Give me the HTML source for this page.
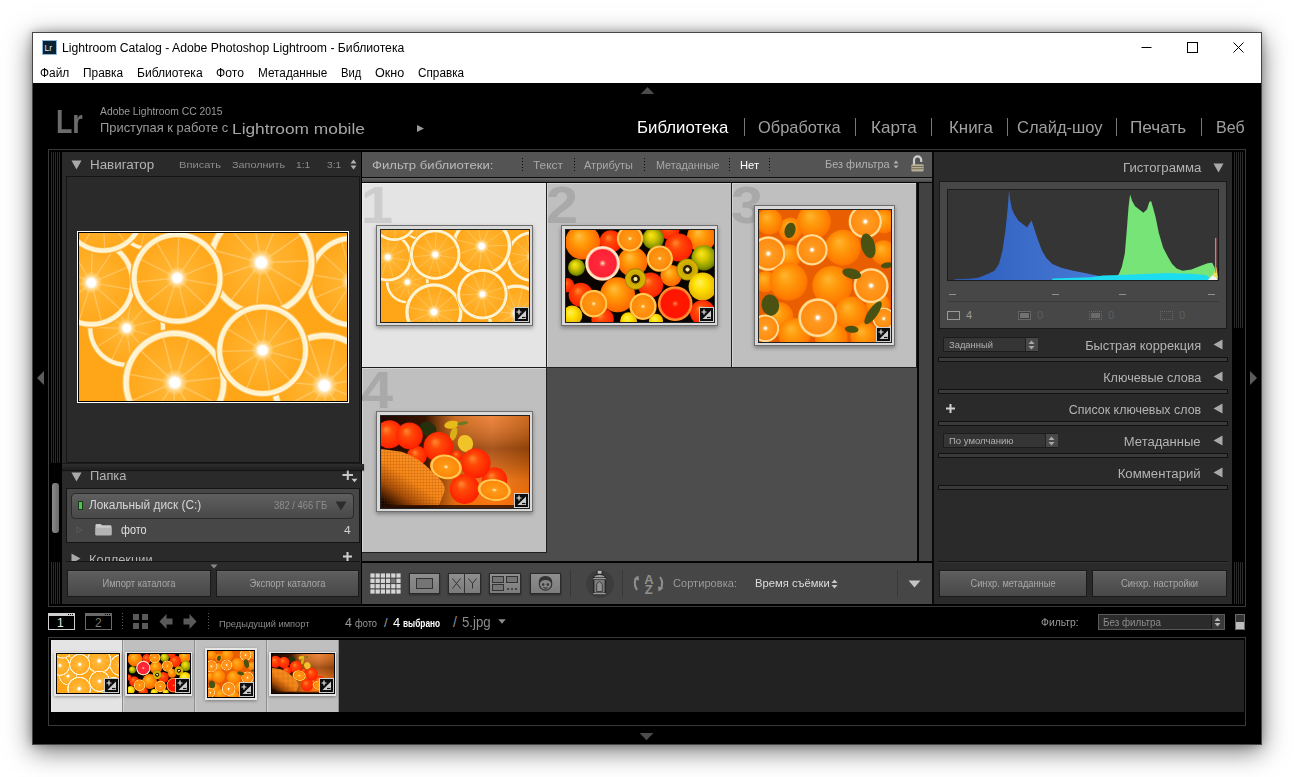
<!DOCTYPE html>
<html lang="ru">
<head>
<meta charset="utf-8">
<title>Lightroom Catalog - Adobe Photoshop Lightroom - Библиотека</title>
<style>
html,body{margin:0;padding:0}
body{width:1294px;height:777px;background:#fff;position:relative;overflow:hidden;font-family:"Liberation Sans",sans-serif;}
.a{position:absolute}
.t{position:absolute;white-space:nowrap;line-height:1;transform-origin:0 0}
#win{left:32px;top:32px;width:1230px;height:713px;box-sizing:border-box;border:1px solid #464646;background:#000;box-shadow:0 6px 24px rgba(0,0,0,.55),0 0 8px rgba(0,0,0,.25)}
#titlebar{left:33px;top:33px;width:1228px;height:50px;background:#fff}
.menu{font-size:12px;color:#000;top:67px}
.pan{background:#2a2a2a}
.hd{font-size:12.5px;color:#b4b4b4}
.sm{font-size:9.5px;color:#8c8c8c}
.strip{background:repeating-linear-gradient(90deg,#2b2b2b 0,#2b2b2b 1px,#000 1px,#000 2px)}
.btn{background:linear-gradient(#5e5e5e,#484848);border:1px solid #1a1a1a;box-sizing:border-box;box-shadow:inset 0 1px 0 #666}
.btn span{position:absolute;left:0;right:0;text-align:center;font-size:10px;color:#a8a8a8;line-height:1}
.sep{height:5px;box-sizing:border-box;border:1px solid #111;background:#3a3a3a;left:938px;width:290px}
.mod{font-size:17px;color:#a0a0a0;top:119px}
.cell{background:#bfbfbf}
.idx{font-weight:bold;font-size:51px;color:#a9a9a9;line-height:1;transform:scaleX(1.13)}
.fr{box-sizing:border-box;border:1px solid #6e6e6e;background:#d9d9d9;box-shadow:0 2px 4px rgba(0,0,0,.35)}
.ph{position:absolute;display:block}
.bdg{position:absolute;width:14px;height:14px;box-sizing:border-box;border:1px solid #d8d8d8;background:#111}
.dd{box-sizing:border-box;border:1px solid #1c1c1c;background:#353535}
</style>
</head>
<body>
<svg width="0" height="0" style="position:absolute">
<defs>
<radialGradient id="gsl" cx="50%" cy="50%" r="50%"><stop offset="0" stop-color="#fff"/><stop offset="0.09" stop-color="#fff"/><stop offset="0.16" stop-color="#ffd27a"/><stop offset="0.24" stop-color="#ffb430"/><stop offset="0.84" stop-color="#ffa81c"/><stop offset="0.87" stop-color="#ffefc4"/><stop offset="0.95" stop-color="#fff6dc"/><stop offset="0.975" stop-color="#ffbb48"/><stop offset="1" stop-color="#ffa010"/></radialGradient>
<g id="sl"><circle r="1" fill="url(#gsl)"/><path d="M0.115 0.035L0.812 0.251M0.077 0.092L0.547 0.650M0.015 0.119L0.109 0.843M-0.051 0.108L-0.364 0.768M-0.102 0.063L-0.722 0.449M-0.120 -0.002L-0.850 -0.012M-0.100 -0.066L-0.708 -0.470M-0.048 -0.110L-0.342 -0.778M0.019 -0.119L0.133 -0.840M0.080 -0.090L0.566 -0.634M0.116 -0.032L0.819 -0.228" stroke="#ffd890" stroke-width="0.03" opacity="0.5" fill="none"/></g>
<symbol id="p1" viewBox="0 0 148 92">
<rect width="148" height="92" fill="#ffa518"/>
<use href="#sl" transform="translate(26.3 52.1) scale(22) rotate(0)"/>
<use href="#sl" transform="translate(135.5 83.6) scale(30) rotate(37)"/>
<use href="#sl" transform="translate(151 26.6) scale(26) rotate(74)"/>
<use href="#sl" transform="translate(38 -8) scale(18) rotate(21)"/>
<use href="#sl" transform="translate(6.8 27.2) scale(25) rotate(58)"/>
<use href="#sl" transform="translate(13.3 -12.3) scale(24) rotate(5)"/>
<use href="#sl" transform="translate(52.9 81.9) scale(29.5) rotate(42)"/>
<use href="#sl" transform="translate(100.6 16.2) scale(30.5) rotate(79)"/>
<use href="#sl" transform="translate(54.2 24.6) scale(26) rotate(26)"/>
<use href="#sl" transform="translate(101.4 64.2) scale(26) rotate(63)"/>
</symbol>
<!--P2--><radialGradient id="gO" cx="0.5" cy="0.5" r="0.62" fx="0.38" fy="0.32"><stop offset="0" stop-color="#ffc040"/><stop offset="0.35" stop-color="#ff9a08"/><stop offset="0.8" stop-color="#ff6a00"/><stop offset="1" stop-color="#e04000"/></radialGradient>
<radialGradient id="gR" cx="0.5" cy="0.5" r="0.62" fx="0.38" fy="0.32"><stop offset="0" stop-color="#ff8a30"/><stop offset="0.3" stop-color="#ff4a08"/><stop offset="0.8" stop-color="#ff2200"/><stop offset="1" stop-color="#c81000"/></radialGradient>
<radialGradient id="gY" cx="0.5" cy="0.5" r="0.62" fx="0.38" fy="0.32"><stop offset="0" stop-color="#fff060"/><stop offset="0.4" stop-color="#ffe000"/><stop offset="0.8" stop-color="#e8b800"/><stop offset="1" stop-color="#a08000"/></radialGradient>
<radialGradient id="gG" cx="0.5" cy="0.5" r="0.62" fx="0.38" fy="0.32"><stop offset="0" stop-color="#f8e820"/><stop offset="0.35" stop-color="#d8c800"/><stop offset="0.7" stop-color="#8a9a00"/><stop offset="1" stop-color="#3a4a00"/></radialGradient>
<radialGradient id="gT" cx="0.5" cy="0.5" r="0.62" fx="0.38" fy="0.32"><stop offset="0" stop-color="#ffb530"/><stop offset="0.35" stop-color="#ff9a0c"/><stop offset="0.75" stop-color="#ff7c00"/><stop offset="0.92" stop-color="#f86400"/><stop offset="1" stop-color="#d84800"/></radialGradient>
<radialGradient id="hO" cx="0.5" cy="0.5" r="0.5" fx="0.5" fy="0.5"><stop offset="0" stop-color="#fff0c0"/><stop offset="0.08" stop-color="#ffd080"/><stop offset="0.16" stop-color="#ff9a18"/><stop offset="0.8" stop-color="#ff8808"/><stop offset="0.86" stop-color="#ffd070"/><stop offset="0.95" stop-color="#ffc040"/><stop offset="1" stop-color="#ff8a00"/></radialGradient>
<radialGradient id="hP" cx="0.5" cy="0.5" r="0.5" fx="0.5" fy="0.5"><stop offset="0" stop-color="#ffe0c0"/><stop offset="0.1" stop-color="#ff8a70"/><stop offset="0.2" stop-color="#ff2a3c"/><stop offset="0.78" stop-color="#ff2034"/><stop offset="0.85" stop-color="#ffd0b0"/><stop offset="0.94" stop-color="#fff0d8"/><stop offset="1" stop-color="#ffb070"/></radialGradient>
<radialGradient id="hR" cx="0.5" cy="0.5" r="0.5" fx="0.5" fy="0.5"><stop offset="0" stop-color="#ffb080"/><stop offset="0.08" stop-color="#ff5020"/><stop offset="0.2" stop-color="#ff1800"/><stop offset="0.8" stop-color="#ff1400"/><stop offset="0.87" stop-color="#ff7a30"/><stop offset="0.95" stop-color="#ff9a30"/><stop offset="1" stop-color="#ff6a00"/></radialGradient>
<radialGradient id="hK" cx="0.5" cy="0.5" r="0.5" fx="0.5" fy="0.5"><stop offset="0" stop-color="#fff0b0"/><stop offset="0.16" stop-color="#f0e090"/><stop offset="0.22" stop-color="#201800"/><stop offset="0.38" stop-color="#3a2800"/><stop offset="0.46" stop-color="#c8a800"/><stop offset="0.85" stop-color="#d8b400"/><stop offset="1" stop-color="#8a7a00"/></radialGradient>
<radialGradient id="hT" cx="0.5" cy="0.5" r="0.5" fx="0.5" fy="0.5"><stop offset="0" stop-color="#fff"/><stop offset="0.07" stop-color="#fff"/><stop offset="0.14" stop-color="#ffb860"/><stop offset="0.25" stop-color="#ff9a20"/><stop offset="0.82" stop-color="#ff8c10"/><stop offset="0.88" stop-color="#ffe0a0"/><stop offset="0.95" stop-color="#ffd890"/><stop offset="1" stop-color="#ff9a20"/></radialGradient>
<linearGradient id="bg4" x1="0" y1="0" x2="1" y2="0"><stop offset="0" stop-color="#1c0800"/><stop offset="0.3" stop-color="#3a1400"/><stop offset="0.5" stop-color="#c0661c"/><stop offset="0.75" stop-color="#e8803a"/><stop offset="1" stop-color="#b85a10"/></linearGradient>
<linearGradient id="bg4b" x1="0" y1="0" x2="0" y2="1"><stop offset="0" stop-color="#ff9a50" stop-opacity="0.25"/><stop offset="0.35" stop-color="#5a2400" stop-opacity="0.45"/><stop offset="0.7" stop-color="#ff7a10" stop-opacity="0.5"/><stop offset="1" stop-color="#ff7000" stop-opacity="0.8"/></linearGradient>
<linearGradient id="sack" x1="0.9" y1="0" x2="0.15" y2="1"><stop offset="0" stop-color="#ff9830"/><stop offset="0.55" stop-color="#f88818"/><stop offset="0.78" stop-color="#a84e08"/><stop offset="1" stop-color="#140500"/></linearGradient>
<linearGradient id="m4g" x1="0" y1="0" x2="1" y2="0"><stop offset="0.3" stop-color="#000"/><stop offset="0.6" stop-color="#fff"/></linearGradient><mask id="msk4" maskUnits="userSpaceOnUse" x="0" y="0" width="148" height="92"><rect width="148" height="92" fill="url(#m4g)"/></mask>
<pattern id="weave" width="3" height="3" patternUnits="userSpaceOnUse"><path d="M0 0h3M0 0v3" stroke="#7a3400" stroke-width="0.6" opacity="0.55"/></pattern>
<symbol id="p2" viewBox="0 0 148 92"><rect width="148" height="92" fill="#0a0400"/>
<circle cx="103.7" cy="0.4" r="9.6" fill="url(#gR)"/>
<circle cx="44.8" cy="11.4" r="11.2" fill="url(#gR)"/>
<circle cx="87.3" cy="8.6" r="10.7" fill="url(#gG)"/>
<circle cx="135.2" cy="7.3" r="14.4" fill="url(#gO)"/>
<circle cx="16.7" cy="12.1" r="17.5" fill="url(#gO)"/>
<circle cx="112.6" cy="17.5" r="14.0" fill="url(#gR)"/>
<circle cx="138.0" cy="27.8" r="12.6" fill="url(#gG)"/>
<circle cx="10.5" cy="37.4" r="8.5" fill="url(#gG)"/>
<circle cx="66.7" cy="31.9" r="14.8" fill="url(#gO)"/>
<circle cx="64.0" cy="8.6" r="13.3" fill="url(#hO)"/>
<circle cx="105.1" cy="45.6" r="10.7" fill="url(#gO)"/>
<circle cx="93.8" cy="28.5" r="13.3" fill="url(#hO)"/>
<circle cx="121.5" cy="39.5" r="11.0" fill="url(#hK)"/>
<circle cx="84.5" cy="55.2" r="12.6" fill="url(#gR)"/>
<circle cx="1.0" cy="55.2" r="7.1" fill="url(#gR)"/>
<circle cx="14.7" cy="64.8" r="12.1" fill="url(#gR)"/>
<circle cx="51.6" cy="64.8" r="17.5" fill="url(#gO)"/>
<circle cx="36.6" cy="33.3" r="17.4" fill="url(#hP)"/>
<circle cx="69.5" cy="49.0" r="10.7" fill="url(#hK)"/>
<circle cx="136.6" cy="56.6" r="14.0" fill="url(#gY)"/>
<circle cx="136.6" cy="82.6" r="12.6" fill="url(#gR)"/>
<circle cx="109.2" cy="73.7" r="17.4" fill="url(#hR)"/>
<circle cx="6.4" cy="85.4" r="9.9" fill="url(#gY)"/>
<circle cx="36.6" cy="89.5" r="11.2" fill="url(#gR)"/>
<circle cx="62.6" cy="90.8" r="8.5" fill="url(#gY)"/>
<circle cx="90.0" cy="90.8" r="7.1" fill="url(#gY)"/>
<circle cx="77.0" cy="76.4" r="13.7" fill="url(#hO)"/>
<circle cx="27.7" cy="73.7" r="14.0" fill="url(#hO)"/>
</symbol><!--/P2-->
<!--P3--><symbol id="p3" viewBox="0 0 132 132"><rect width="132" height="132" fill="#e85e00"/>
<circle cx="31.6" cy="19.4" r="12.0" fill="url(#gT)"/>
<circle cx="10.3" cy="11.6" r="13.2" fill="url(#gT)"/>
<circle cx="54.9" cy="11.6" r="17.1" fill="url(#gT)"/>
<circle cx="124.7" cy="11.6" r="12.0" fill="url(#gT)"/>
<circle cx="124.7" cy="42.7" r="12.4" fill="url(#gT)"/>
<circle cx="29.7" cy="46.6" r="12.4" fill="url(#gT)"/>
<circle cx="6.4" cy="71.8" r="10.7" fill="url(#gT)"/>
<circle cx="84.0" cy="37.8" r="18.0" fill="url(#gT)"/>
<circle cx="106.3" cy="11.6" r="16.9" fill="url(#hT)"/>
<circle cx="9.3" cy="43.6" r="17.5" fill="url(#hT)"/>
<circle cx="53.0" cy="39.8" r="15.9" fill="url(#hT)"/>
<circle cx="29.7" cy="71.8" r="19.0" fill="url(#gT)"/>
<circle cx="118.9" cy="95.1" r="12.0" fill="url(#gT)"/>
<circle cx="73.3" cy="75.7" r="20.0" fill="url(#gT)"/>
<circle cx="112.1" cy="75.7" r="17.8" fill="url(#hT)"/>
<circle cx="91.8" cy="102.8" r="16.3" fill="url(#gT)"/>
<circle cx="20.0" cy="106.7" r="14.4" fill="url(#gT)"/>
<circle cx="124.7" cy="108.6" r="11.3" fill="url(#hT)"/>
<circle cx="35.5" cy="124.2" r="16.3" fill="url(#gT)"/>
<circle cx="72.4" cy="128.0" r="16.3" fill="url(#gT)"/>
<circle cx="105.3" cy="126.1" r="14.0" fill="url(#gT)"/>
<circle cx="6.4" cy="118.3" r="14.0" fill="url(#hT)"/>
<circle cx="58.8" cy="107.7" r="19.8" fill="url(#hT)"/>
<ellipse cx="31.0" cy="20.4" rx="5.4" ry="7.8" transform="rotate(15 31.0 20.4)" fill="#4a5212"/>
<ellipse cx="109.2" cy="35.9" rx="6.8" ry="12.6" transform="rotate(-15 109.2 35.9)" fill="#4a5212"/>
<ellipse cx="92.7" cy="63.6" rx="9.7" ry="5.0" transform="rotate(15 92.7 63.6)" fill="#4a5212"/>
<ellipse cx="11.3" cy="95.1" rx="8.7" ry="10.7" transform="rotate(-10 11.3 95.1)" fill="#4a5212"/>
<ellipse cx="114.1" cy="102.8" rx="4.7" ry="13.6" transform="rotate(35 114.1 102.8)" fill="#4a5212"/>
<ellipse cx="92.7" cy="119.3" rx="6.8" ry="3.5" transform="rotate(5 92.7 119.3)" fill="#4a5212"/>
<ellipse cx="127.7" cy="55.3" rx="5.8" ry="2.9" transform="rotate(-10 127.7 55.3)" fill="#4a5212"/>
</symbol><!--/P3-->
<!--P4--><symbol id="p4" viewBox="0 0 148 92"><rect width="148" height="92" fill="url(#bg4)"/><rect width="148" height="92" fill="url(#bg4b)" mask="url(#msk4)"/>
<ellipse cx="47.0" cy="12.9" rx="8.6" ry="7.2" transform="rotate(20 47.0 12.9)" fill="#26300c"/>
<ellipse cx="70.5" cy="8.7" rx="7.2" ry="3.9" transform="rotate(-10 70.5 8.7)" fill="#e8bc18"/>
<ellipse cx="72.6" cy="17.7" rx="3.3" ry="7.2" transform="rotate(15 72.6 17.7)" fill="#d8b018"/>
<ellipse cx="84.4" cy="27.4" rx="7.6" ry="8.6" transform="rotate(-20 84.4 27.4)" fill="#f0c428"/>
<ellipse cx="81.6" cy="7.3" rx="5.5" ry="1.7" transform="rotate(-10 81.6 7.3)" fill="#6a7a20"/>
<circle cx="36.0" cy="39.8" r="10.0" fill="url(#gR)"/>
<circle cx="113.4" cy="64.0" r="12.7" fill="url(#gR)"/>
<circle cx="8.3" cy="18.4" r="14.1" fill="url(#gR)"/>
<circle cx="28.4" cy="19.8" r="13.4" fill="url(#gR)"/>
<circle cx="76.1" cy="39.8" r="5.5" fill="url(#gR)"/>
<circle cx="57.4" cy="30.8" r="14.9" fill="url(#gR)"/>
<circle cx="94.7" cy="47.4" r="14.9" fill="url(#gR)"/>
<circle cx="83.7" cy="73.0" r="14.9" fill="url(#gR)"/>
<path d="M0.0 32.9L20.7 35.7Q38.7 41.9 51.2 55.7Q65.0 66.8 63.6 75.1L58.1 88.9L0.0 91.4z" fill="url(#sack)"/><path d="M0.0 32.9L20.7 35.7Q38.7 41.9 51.2 55.7Q65.0 66.8 63.6 75.1L58.1 88.9L0.0 91.4z" fill="url(#weave)"/>
<ellipse cx="65.0" cy="50.9" rx="16.2" ry="12.4" transform="rotate(12 65.0 50.9)" fill="url(#hO)"/>
<ellipse cx="113.4" cy="74.0" rx="16.9" ry="11.1" transform="rotate(8 113.4 74.0)" fill="url(#hO)"/>
<rect y="89" width="148" height="3" fill="#2a0c00" opacity="0.8"/>
</symbol><!--/P4-->
<symbol id="bdg" viewBox="0 0 15 15"><rect x="0" y="0" width="15" height="15" fill="#0d0d0d"/><rect x="0.5" y="0.5" width="14" height="14" fill="none" stroke="#cfcfcf"/><path d="M12 3.500V12H3.500z" fill="#cfcfcf"/><path d="M2.500 5h5M5 2.500v5" stroke="#e8e8e8" stroke-width="1.200"/><path d="M8 10.500h3.500" stroke="#111" stroke-width="1.200"/></symbol>
</defs>
</svg>

<div class="a" id="win"></div>
<div class="a" id="titlebar"></div>
<!-- title bar -->
<svg class="a" style="left:42px;top:40px" width="15" height="15" viewBox="0 0 15 15"><rect x="0" y="0" width="15" height="15" fill="#0b2233"/><rect x="0.5" y="0.5" width="14" height="14" fill="none" stroke="#8fb6d6" stroke-width="1"/><text x="2.6" y="11" font-family="Liberation Sans,sans-serif" font-size="8.5" fill="#dfeaf4">Lr</text></svg>
<span class="t" id="ttl" style="left:61.7px;top:42px;font-size:12px;color:#000;transform:scale(1.0185,1)">Lightroom Catalog - Adobe Photoshop Lightroom - Библиотека</span>
<svg class="a" style="left:1130px;top:33px" width="131" height="29" viewBox="0 0 131 29" fill="none" stroke="#000" stroke-width="1"><path d="M11.5 14.5h10"/><rect x="57.5" y="9.5" width="10" height="10"/><path d="M103.5 9.5l10 10M113.5 9.5l-10 10"/></svg>
<span class="t menu" id="m1" style="left:39.9px;transform:scale(0.9927,1)">Файл</span>
<span class="t menu" id="m2" style="left:83.0px;transform:scale(0.9890,1)">Правка</span>
<span class="t menu" id="m3" style="left:136.5px;transform:scale(1.0054,1)">Библиотека</span>
<span class="t menu" id="m4" style="left:215.9px;transform:scale(1.0117,1)">Фото</span>
<span class="t menu" id="m5" style="left:257.9px;transform:scale(0.9806,1)">Метаданные</span>
<span class="t menu" id="m6" style="left:341.0px;transform:scale(0.9347,1)">Вид</span>
<span class="t menu" id="m7" style="left:374.8px;transform:scale(1.0469,1)">Окно</span>
<span class="t menu" id="m8" style="left:417.8px;transform:scale(0.9792,1)">Справка</span>

<!-- identity plate + module picker -->
<svg class="a" style="left:640px;top:86px" width="16" height="9" viewBox="0 0 16 9"><path d="M0.800 7.900L7.500 1l6.700 6.900z" fill="#4c4c4c"/></svg>
<svg class="a" style="left:639px;top:732px" width="16" height="9" viewBox="0 0 16 9"><path d="M0.600 1.100h13.800L7.500 8.300z" fill="#4c4c4c"/></svg>
<svg class="a" style="left:36px;top:370px" width="9" height="16" viewBox="0 0 9 16"><path d="M8 1v14L1 8z" fill="#5c5c5c"/></svg>
<svg class="a" style="left:1249px;top:370px" width="9" height="16" viewBox="0 0 9 16"><path d="M1 1v14l7-7z" fill="#5c5c5c"/></svg>
<span class="t" id="lr" style="left:55.6px;top:105px;font-size:28px;color:#6b6b6b;font-weight:bold;transform:scale(0.9571,1.200)">Lr</span>
<span class="t" id="idp1" style="left:100.1px;top:106px;font-size:10.5px;color:#9a9a9a;transform:scale(0.9860,1)">Adobe Lightroom CC 2015</span>
<span class="t" id="idp2" style="left:100.1px;top:121px;font-size:13.5px;color:#9a9a9a;transform:scale(0.9558,1)">Приступая к работе с</span>
<span class="t" id="idp3" style="left:232.0px;top:121px;font-size:15px;color:#a6a6a6;transform:scale(1.1550,1)">Lightroom mobile</span>
<svg class="a" style="left:416px;top:124px" width="9" height="9" viewBox="0 0 9 9"><path d="M1 1l7 3.5L1 8z" fill="#9a9a9a"/></svg>
<span class="t mod" id="md1" style="left:637.3px;color:#fff;transform:scale(0.9877,1)">Библиотека</span>
<span class="t mod" id="md2" style="left:757.9px;transform:scale(0.9644,1)">Обработка</span>
<span class="t mod" id="md3" style="left:871.1px;transform:scale(1.0044,1)">Карта</span>
<span class="t mod" id="md4" style="left:949.1px;transform:scale(0.9937,1)">Книга</span>
<span class="t mod" id="md5" style="left:1016.9px;transform:scale(0.9712,1)">Слайд-шоу</span>
<span class="t mod" id="md6" style="left:1130.4px;transform:scale(1.0089,1)">Печать</span>
<span class="t mod" id="md7" style="left:1216.3px;transform:scale(0.9425,1)">Веб</span>
<div class="a" style="left:744px;top:118px;width:1px;height:18px;background:#777"></div>
<div class="a" style="left:855px;top:118px;width:1px;height:18px;background:#777"></div>
<div class="a" style="left:931px;top:118px;width:1px;height:18px;background:#777"></div>
<div class="a" style="left:1007px;top:118px;width:1px;height:18px;background:#777"></div>
<div class="a" style="left:1116px;top:118px;width:1px;height:18px;background:#777"></div>
<div class="a" style="left:1201px;top:118px;width:1px;height:18px;background:#777"></div>
<!-- frames -->
<div class="a" style="left:48px;top:149px;width:1198px;height:458px;box-sizing:border-box;border:1px solid #3a3a3a"></div>
<div class="a" style="left:48px;top:637px;width:1198px;height:89px;box-sizing:border-box;border:1px solid #3a3a3a"></div>

<!-- left panel -->
<div class="a strip" style="left:51px;top:152px;width:10px;height:311px"></div>
<div class="a strip" style="left:51px;top:562px;width:10px;height:42px"></div>
<div class="a" style="left:52px;top:483px;width:7px;height:50px;border-radius:3px;background:linear-gradient(90deg,#8a8a8a,#6a6a6a)"></div>
<div class="a pan" style="left:62px;top:152px;width:299px;height:452px"></div>
<svg class="a" style="left:71px;top:160px" width="11" height="10" viewBox="0 0 11 10"><path d="M0.5 0.5h10L5.5 9.5z" fill="#a9a9a9"/></svg>
<span class="t hd" id="nav" style="left:89.6px;top:159px;transform:scale(1.0689,1)">Навигатор</span>
<span class="t sm" id="nv1" style="left:178.9px;top:160px;transform:scale(1.1692,1)">Вписать</span>
<span class="t sm" id="nv2" style="left:231.8px;top:160px;transform:scale(1.1385,1)">Заполнить</span>
<span class="t sm" id="nv3" style="left:296.1px;top:160px;transform:scale(1.0742,1)">1:1</span>
<span class="t sm" id="nv4" style="left:326.7px;top:160px;transform:scale(1.0742,1)">3:1</span>
<svg class="a" style="left:350px;top:159px" width="7" height="11" viewBox="0 0 7 11"><path d="M3.5 0.5L6.5 4.5h-6zM3.5 10.5L6.5 6.5h-6z" fill="#b0b0b0"/></svg>
<div class="a" style="left:66px;top:176px;width:294px;height:287px;box-sizing:border-box;border:1px solid #151515;background:#2a2a2a"></div>
<div class="a" style="left:77px;top:231px;width:272px;height:172px;box-sizing:border-box;border:1px solid #fff;background:#000"></div>
<svg class="ph" style="left:79px;top:233px" width="268" height="168" viewBox="0 0 148 92" preserveAspectRatio="none"><use href="#p1"/></svg>
<!-- folders -->
<div class="a" style="left:62px;top:463px;width:299px;height:1px;background:#1a1a1a"></div><div class="a" style="left:62px;top:464px;width:302px;height:6px;z-index:3;background:linear-gradient(#2e2e2e,#1e1e1e);box-shadow:0 1px 1px rgba(0,0,0,.5)"></div>
<svg class="a" style="left:71px;top:472px" width="11" height="10" viewBox="0 0 11 10"><path d="M0.5 0.5h10L5.5 9.5z" fill="#a9a9a9"/></svg>
<span class="t hd" id="fld" style="left:89.7px;top:470px;transform:scale(1.0281,1)">Папка</span>
<svg class="a" style="left:342px;top:470px" width="16" height="13" viewBox="0 0 16 13"><path d="M0.500 5h10.500M5.800 0v10" stroke="#c8c8c8" stroke-width="2" fill="none"/><path d="M9.500 8.800h6L12.500 12.300z" fill="#c8c8c8"/></svg>
<div class="a" style="left:66px;top:488px;width:294px;height:55px;box-sizing:border-box;border:1px solid #151515;background:#474747"></div>
<div class="a" style="left:71px;top:493px;width:283px;height:26px;box-sizing:border-box;border:1px solid #2a2a2a;border-radius:4px;background:linear-gradient(#5f5f5f,#484848)"></div>
<div class="a" style="left:78px;top:501px;width:5px;height:9px;box-sizing:border-box;border:1px solid #1a3a1a;background:#4fc24f"></div>
<span class="t" id="vol" style="left:88.9px;top:499px;font-size:12px;color:#d6d6d6;transform:scale(0.9880,1)">Локальный диск (C:)</span>
<span class="t" id="volsz" style="left:273.7px;top:501px;font-size:10px;color:#8f8f8f;transform:scale(0.9403,1)">382 / 466 ГБ</span>
<svg class="a" style="left:335px;top:501px" width="12" height="10" viewBox="0 0 12 10"><path d="M0.5 0.5h11L6 9.5z" fill="#2c2c2c"/></svg>
<svg class="a" style="left:76px;top:526px" width="7" height="8" viewBox="0 0 7 8"><path d="M1 1l5 3-5 3z" fill="none" stroke="#6a6a6a" stroke-width="1" stroke-dasharray="1 1"/></svg>
<svg class="a" style="left:95px;top:523px" width="17" height="13" viewBox="0 0 18 14" preserveAspectRatio="none"><path d="M0.5 2.5q0-1.5 1.5-1.5h4l1.5 1.5h8.500q1.500 0 1.500 1.500v8q0 1-1 1h-15q-1 0-1-1z" fill="#c9c9c9"/><path d="M0.5 5h17v7.500q0 1-1 1h-15q-1 0-1-1z" fill="#b3b3b3"/></svg>
<span class="t" id="foto" style="left:120.8px;top:524px;font-size:12.5px;color:#e0e0e0;transform:scale(0.8678,1)">фото</span>
<span class="t" id="foton" style="left:343.7px;top:525px;font-size:11px;color:#d0d0d0;transform:scale(1.0939,1)">4</span>
<div class="a" style="left:62px;top:544px;width:299px;height:18px;overflow:hidden">
<svg class="a" style="left:9px;top:9px" width="10" height="11" viewBox="0 0 10 11"><path d="M0.5 0.5v10L9.500 5.5z" fill="#a9a9a9"/></svg>
<span class="t hd" id="col" style="left:27.4px;top:10px;transform:scale(1.0243,1)">Коллекции</span>
<svg class="a" style="left:280px;top:7px" width="14" height="14" viewBox="0 0 14 14"><path d="M1 5.5h9M5.5 1v9" stroke="#d0d0d0" stroke-width="2" fill="none"/></svg>
</div>
<div class="a" style="left:66px;top:561px;width:294px;height:1px;background:#151515"></div>
<svg class="a" style="left:210px;top:564px" width="8" height="5" viewBox="0 0 8 5"><path d="M0.5 0.5h7L4 4.500z" fill="#8a8a8a"/></svg>
<div class="a btn" style="left:67px;top:570px;width:144px;height:27px"><span id="imp" style="top:8px;transform:scaleX(0.9335)">Импорт каталога</span></div>
<div class="a btn" style="left:216px;top:570px;width:143px;height:27px"><span id="exp" style="top:8px;transform:scaleX(0.9378)">Экспорт каталога</span></div>

<!-- center: filter bar -->
<div class="a" style="left:362px;top:152px;width:570px;height:25px;background:#545454"></div>
<div class="a" style="left:362px;top:177px;width:570px;height:1px;background:#0c0c0c"></div>
<div class="a" style="left:362px;top:178px;width:570px;height:4px;background:linear-gradient(#686868,#484848)"></div>
<div class="a" style="left:362px;top:182px;width:570px;height:1px;background:#060606"></div>
<span class="t" id="flt" style="left:371.9px;top:160px;font-size:11.5px;color:#b9b9b9;transform:scale(1.1422,1)">Фильтр библиотеки:</span>
<div class="a" style="left:522px;top:158px;width:1px;height:13px;background:repeating-linear-gradient(#0a0a0a 0,#0a0a0a 1px,transparent 1px,transparent 3px)"></div>
<div class="a" style="left:574px;top:158px;width:1px;height:13px;background:repeating-linear-gradient(#0a0a0a 0,#0a0a0a 1px,transparent 1px,transparent 3px)"></div>
<div class="a" style="left:644px;top:158px;width:1px;height:13px;background:repeating-linear-gradient(#0a0a0a 0,#0a0a0a 1px,transparent 1px,transparent 3px)"></div>
<div class="a" style="left:729px;top:158px;width:1px;height:13px;background:repeating-linear-gradient(#0a0a0a 0,#0a0a0a 1px,transparent 1px,transparent 3px)"></div>
<div class="a" style="left:769px;top:158px;width:1px;height:13px;background:repeating-linear-gradient(#0a0a0a 0,#0a0a0a 1px,transparent 1px,transparent 3px)"></div>
<span class="t" id="f1" style="left:533.0px;top:160px;font-size:11px;color:#a8a8a8;transform:scale(1.0829,1)">Текст</span>
<span class="t" id="f2" style="left:584.4px;top:160px;font-size:11px;color:#a8a8a8;transform:scale(0.9999,1)">Атрибуты</span>
<span class="t" id="f3" style="left:655.9px;top:160px;font-size:11px;color:#a8a8a8;transform:scale(0.9802,1)">Метаданные</span>
<span class="t" id="f4" style="left:739.8px;top:160px;font-size:11px;color:#fff;transform:scale(1.0195,1)">Нет</span>
<span class="t" id="f5" style="left:825.0px;top:159px;font-size:11px;color:#b0b0b0;transform:scale(0.9961,1)">Без фильтра</span>
<svg class="a" style="left:893px;top:160px" width="6" height="9" viewBox="0 0 6 9"><path d="M3 0.5L5.500 3.500h-5zM3 8.500L5.500 5.500h-5z" fill="#b0b0b0"/></svg>
<svg class="a" style="left:911px;top:154px" width="13" height="18" viewBox="0 0 13 18"><path d="M3 11V6a3.600 3.600 0 0 1 7.200 0V8" fill="none" stroke="#cfcfcf" stroke-width="2.200"/><rect x="0.400" y="10.300" width="12.200" height="7.200" rx="1" fill="#b4ae94"/><path d="M0.800 12.500h11.400M0.800 14.700h11.400" stroke="#6e6952" stroke-width="0.900"/></svg>
<!-- grid -->
<div class="a" style="left:362px;top:183px;width:557px;height:378px;background:#4d4d4d"></div>
<div class="a" style="left:917px;top:183px;width:2px;height:378px;background:#050505"></div>
<div class="a" style="left:919px;top:183px;width:13px;height:378px;background:#424242"></div>
<div class="a" style="left:932px;top:152px;width:2px;height:452px;background:#0a0a0a"></div>
<div class="a" style="left:362px;top:561px;width:570px;height:2px;background:#050505"></div>
<div class="a" style="left:362px;top:183px;width:185px;height:185px;background:#1f1f1f"></div>
<div class="a" style="left:362px;top:183px;width:184px;height:184px;overflow:hidden;background:#e4e4e4;box-shadow:inset 1px 1px 0 rgba(255,255,255,.35)"><span class="t idx" id="ix1" style="left:-1.5px;top:-3px;color:#cdcdcd">1</span></div>
<div class="a" style="left:547px;top:183px;width:185px;height:185px;background:#1f1f1f"></div>
<div class="a" style="left:547px;top:183px;width:184px;height:184px;overflow:hidden;background:#bfbfbf;box-shadow:inset 1px 1px 0 rgba(255,255,255,.35)"><span class="t idx" id="ix2" style="left:-1.5px;top:-3px;color:#a9a9a9">2</span></div>
<div class="a" style="left:732px;top:183px;width:185px;height:185px;background:#1f1f1f"></div>
<div class="a" style="left:732px;top:183px;width:184px;height:184px;overflow:hidden;background:#bfbfbf;box-shadow:inset 1px 1px 0 rgba(255,255,255,.35)"><span class="t idx" id="ix3" style="left:-1.5px;top:-3px;color:#a9a9a9">3</span></div>
<div class="a" style="left:362px;top:368px;width:185px;height:185px;background:#1f1f1f"></div>
<div class="a" style="left:362px;top:368px;width:184px;height:184px;overflow:hidden;background:#bfbfbf;box-shadow:inset 1px 1px 0 rgba(255,255,255,.35)"><span class="t idx" id="ix4" style="left:-1.5px;top:-3px;color:#a9a9a9">4</span></div>
<div class="a fr" style="left:376px;top:225px;width:157px;height:101px"></div>
<div class="a" style="left:379.5px;top:228.5px;width:150px;height:94px;background:#222"></div>
<svg class="ph" style="left:380.5px;top:229.5px" width="148" height="92" viewBox="0 0 148 92" preserveAspectRatio="none"><use href="#p1"/></svg>
<svg class="a" style="left:514px;top:307px" width="15" height="15" viewBox="0 0 15 15"><use href="#bdg"/></svg>
<div class="a fr" style="left:561px;top:225px;width:157px;height:101px"></div>
<div class="a" style="left:564.5px;top:228.5px;width:150px;height:94px;background:#222"></div>
<svg class="ph" style="left:565.5px;top:229.5px" width="148" height="92" viewBox="0 0 148 92" preserveAspectRatio="none"><use href="#p2"/></svg>
<svg class="a" style="left:699px;top:307px" width="15" height="15" viewBox="0 0 15 15"><use href="#bdg"/></svg>
<div class="a fr" style="left:754px;top:205px;width:141px;height:141px"></div>
<div class="a" style="left:757.5px;top:208.5px;width:134px;height:134px;background:#222"></div>
<svg class="ph" style="left:758.5px;top:209.5px" width="132" height="132" viewBox="0 0 132 132" preserveAspectRatio="none"><use href="#p3"/></svg>
<svg class="a" style="left:876px;top:327px" width="15" height="15" viewBox="0 0 15 15"><use href="#bdg"/></svg>
<div class="a fr" style="left:376px;top:411px;width:157px;height:101px"></div>
<div class="a" style="left:379.5px;top:414.5px;width:150px;height:94px;background:#222"></div>
<svg class="ph" style="left:380.5px;top:415.5px" width="148" height="92" viewBox="0 0 148 92" preserveAspectRatio="none"><use href="#p4"/></svg>
<svg class="a" style="left:514px;top:493px" width="15" height="15" viewBox="0 0 15 15"><use href="#bdg"/></svg>
<!-- toolbar -->
<div class="a" style="left:362px;top:563px;width:570px;height:41px;background:#464646"></div>
<!-- toolbar icons -->
<svg class="a" style="left:370px;top:573px" width="31" height="21" viewBox="0 0 31 21"><rect x="0.4" y="0.4" width="4.2" height="4.2" fill="#d6d6d6"/><rect x="5.6" y="0.4" width="4.2" height="4.2" fill="#d6d6d6"/><rect x="10.8" y="0.4" width="4.2" height="4.2" fill="#d6d6d6"/><rect x="16" y="0.4" width="4.2" height="4.2" fill="#d6d6d6"/><rect x="21.2" y="0.4" width="4.2" height="4.2" fill="#d6d6d6"/><rect x="26.4" y="0.4" width="4.2" height="4.2" fill="#d6d6d6"/><rect x="0.4" y="5.75" width="4.2" height="4.2" fill="#d6d6d6"/><rect x="5.6" y="5.75" width="4.2" height="4.2" fill="#d6d6d6"/><rect x="10.8" y="5.75" width="4.2" height="4.2" fill="#d6d6d6"/><rect x="16" y="5.75" width="4.2" height="4.2" fill="#d6d6d6"/><rect x="21.2" y="5.75" width="4.2" height="4.2" fill="#7a7a7a"/><rect x="26.4" y="5.75" width="4.2" height="4.2" fill="#d6d6d6"/><rect x="0.4" y="11.1" width="4.2" height="4.2" fill="#d6d6d6"/><rect x="5.6" y="11.1" width="4.2" height="4.2" fill="#d6d6d6"/><rect x="10.8" y="11.1" width="4.2" height="4.2" fill="#d6d6d6"/><rect x="16" y="11.1" width="4.2" height="4.2" fill="#d6d6d6"/><rect x="21.2" y="11.1" width="4.2" height="4.2" fill="#d6d6d6"/><rect x="26.4" y="11.1" width="4.2" height="4.2" fill="#d6d6d6"/><rect x="0.4" y="16.45" width="4.2" height="4.2" fill="#d6d6d6"/><rect x="5.6" y="16.45" width="4.2" height="4.2" fill="#d6d6d6"/><rect x="10.8" y="16.45" width="4.2" height="4.2" fill="#d6d6d6"/><rect x="16" y="16.45" width="4.2" height="4.2" fill="#d6d6d6"/><rect x="21.2" y="16.45" width="4.2" height="4.2" fill="#d6d6d6"/><rect x="26.4" y="16.45" width="4.2" height="4.2" fill="#d6d6d6"/></svg>
<div class="a" style="left:409px;top:573px;width:31px;height:21px;box-sizing:border-box;border:1px solid #2a2a2a;background:linear-gradient(#8e8e8e,#7c7c7c);box-shadow:0 1px 2px rgba(0,0,0,.4)"></div>
<div class="a" style="left:416px;top:578px;width:17px;height:11px;box-sizing:border-box;border:1px solid #333;background:#757575"></div>
<div class="a" style="left:448px;top:573px;width:33px;height:21px;box-sizing:border-box;border:1px solid #2a2a2a;background:linear-gradient(#8e8e8e,#7c7c7c);box-shadow:0 1px 2px rgba(0,0,0,.4)"></div>
<svg class="a" style="left:448px;top:573px" width="33" height="21" viewBox="0 0 33 21" fill="none" stroke="#333" stroke-width="1"><path d="M16.500 0v21M4.500 5.500l8 10M12.500 5.500l-8 10M20.500 5.500l4 5 4-5M24.500 10.500v5"/></svg>
<div class="a" style="left:489px;top:573px;width:32px;height:21px;box-sizing:border-box;border:1px solid #2a2a2a;background:linear-gradient(#8e8e8e,#7c7c7c);box-shadow:0 1px 2px rgba(0,0,0,.4)"></div>
<svg class="a" style="left:489px;top:573px" width="32" height="21" viewBox="0 0 32 21" fill="#757575" stroke="#333" stroke-width="1"><rect x="3.500" y="3.500" width="11" height="6"/><rect x="3.500" y="11.500" width="11" height="6"/><rect x="17.500" y="3.500" width="11" height="6"/><path d="M18 16h2M22 16h2M26 16h2" stroke-width="1.500"/></svg>
<div class="a" style="left:530px;top:573px;width:31px;height:21px;box-sizing:border-box;border:1px solid #2a2a2a;background:linear-gradient(#8e8e8e,#7c7c7c);box-shadow:0 1px 2px rgba(0,0,0,.4)"></div>
<svg class="a" style="left:530px;top:573px" width="31" height="21" viewBox="0 0 31 21" fill="none" stroke="#333" stroke-width="1.200"><circle cx="15.500" cy="11" r="6.200"/><path d="M9.300 10q0-6.500 6.200-6.500t6.200 6.500q-1.500-3.500-6.200-3.500T9.300 10z" fill="#333"/><circle cx="13.200" cy="11.500" r="0.700" fill="#333"/><circle cx="17.800" cy="11.500" r="0.700" fill="#333"/><path d="M13.500 14.500q2 1.300 4 0"/></svg>
<div class="a" style="left:570px;top:570px;width:1px;height:27px;background:#383838"></div>
<div class="a" style="left:585.500px;top:569.500px;width:28px;height:28px;border-radius:14px;background:radial-gradient(#3c3c3c 60%,#434343 100%)"></div>
<svg class="a" style="left:592px;top:569px" width="15" height="27" viewBox="0 0 15 27"><rect x="5.200" y="1.200" width="4.800" height="4" rx="0.800" fill="#b8b8b8" stroke="#1c1c1c" stroke-width="0.800"/><path d="M1.800 9Q1.800 5.500 7.500 5.500T13.200 9z" fill="#9c9c9c" stroke="#1a1a1a" stroke-width="0.900"/><rect x="1.800" y="10.200" width="11.400" height="14.200" fill="#7a7a7a" stroke="#181818" stroke-width="1"/><path d="M4.700 22.500V15.200L7.500 12.300l2.800 2.900v7.300z" fill="#919191" stroke="#2c2c2c" stroke-width="0.800"/><rect x="0.900" y="8.900" width="13.200" height="1.500" rx="0.700" fill="#d2d2d2" stroke="#1a1a1a" stroke-width="0.600"/><rect x="0.900" y="24" width="13.200" height="1.600" rx="0.700" fill="#d2d2d2" stroke="#1a1a1a" stroke-width="0.600"/></svg>
<div class="a" style="left:622px;top:570px;width:1px;height:27px;background:#383838"></div>
<svg class="a" style="left:631px;top:572px" width="35" height="24" viewBox="0 0 35 24"><text x="13.200" y="11.500" style="font-family:Liberation Sans,sans-serif;font-weight:bold;font-size:13px" fill="#8f8f8f">A</text><text x="13.800" y="22.200" style="font-family:Liberation Sans,sans-serif;font-weight:bold;font-size:13px" fill="#8f8f8f">Z</text><path d="M6 5q-4.500 6 0 13" fill="none" stroke="#8f8f8f" stroke-width="2"/><path d="M2.500 7l5-3.500 0.500 5z" fill="#8f8f8f"/><path d="M29 5q4.500 6 0 13" fill="none" stroke="#8f8f8f" stroke-width="2"/><path d="M32.500 16l-5 3.500-0.500-5z" fill="#8f8f8f"/></svg>
<span class="t" id="srt1" style="left:672.6px;top:578px;font-size:11px;color:#9a9a9a;transform:scale(1.0089,1)">Сортировка:</span>
<span class="t" id="srt2" style="left:754.7px;top:578px;font-size:11px;color:#dedede;transform:scale(1.0209,1)">Время съёмки</span>
<svg class="a" style="left:831px;top:579px" width="7" height="10" viewBox="0 0 7 10"><path d="M3.500 0.500L6.500 4h-6zM3.500 9.500L6.500 6h-6z" fill="#c8c8c8"/></svg>
<div class="a" style="left:897px;top:570px;width:1px;height:27px;background:#383838"></div>
<svg class="a" style="left:908px;top:580px" width="13" height="8" viewBox="0 0 13 8"><path d="M0.500 0.500h12L6.500 7.500z" fill="#c4c4c4"/></svg>

<!-- right panel -->
<div class="a pan" style="left:934px;top:152px;width:298px;height:452px"></div>
<div class="a strip" style="left:1234px;top:152px;width:10px;height:176px"></div>
<div class="a strip" style="left:1234px;top:562px;width:10px;height:42px"></div>
<span class="t hd" id="hst" style="left:1123.4px;top:162px;transform:scale(1.0530,1)">Гистограмма</span>
<svg class="a" style="left:1213px;top:163px" width="11" height="10" viewBox="0 0 11 10"><path d="M0.500 0.500h10L5.500 9.500z" fill="#a9a9a9"/></svg>
<div class="a" style="left:939px;top:181px;width:288px;height:148px;box-sizing:border-box;border:1px solid #1a1a1a;background:#474747"></div>
<div class="a" style="left:947px;top:189px;width:272px;height:92px;box-sizing:border-box;border:1px solid #1c1c1c;background:#353535"></div>
<svg class="a" style="left:948px;top:190px" width="270" height="90" viewBox="0 0 270 90"><defs><linearGradient id="hb" x1="0" x2="1"><stop offset="0" stop-color="#2c5cb8"/><stop offset="0.4" stop-color="#3a6ac8"/><stop offset="1" stop-color="#4a7ad8"/></linearGradient></defs><path d="M6.6 90.2L6.6 89.3L21.4 88.7L30.3 87.8L39.1 84.3L46.5 80.7L51.0 73.9L54.5 60.6L57.5 39.9L59.9 16.2L61.0 0.5L62.2 10.3L64.0 19.2L66.4 24.5L70.2 30.4L74.7 34.0L79.1 37.5L81.2 34.0L83.5 30.4L85.9 37.5L89.5 48.8L93.9 60.6L98.3 68.0L104.3 73.9L113.1 77.8L125.0 80.7L136.8 83.1L148.6 85.5L160.5 87.8L160.5 90.2 z" fill="url(#hb)"/><path d="M166.4 90.2L166.4 87.8L170.8 84.3L173.8 76.9L176.8 63.6L178.8 39.9L180.6 16.2L182.1 4.4L184.2 10.9L187.1 16.2L191.6 19.8L195.4 22.7L199.0 19.2L201.3 12.1L203.1 10.9L205.5 19.2L207.8 28.1L210.8 42.9L215.2 57.7L219.7 66.5L224.1 73.9L228.6 78.4L234.5 80.7L243.4 79.6L252.2 76.0L259.6 73.3L264.1 72.8L266.4 76.9L269.4 87.3L269.4 90.2 z" fill="#76e476"/><path d="M104.3 90.2L104.3 88.4L142.7 87.3L154.6 85.5L172.3 84.9L201.9 83.7L219.7 83.1L243.4 83.7L258.1 84.9L262.6 89.0L262.6 90.2 z" fill="#1edcf0"/><path d="M259.6 90.2L265.5 84.3L270.0 90.2z" fill="#f4f4f4"/><path d="M264.7 85.8L268.5 76.9L270.0 88.7z" fill="#f0e060"/><rect x="267.0" y="47.9" width="1.300" height="34.9" fill="#ff6a6a"/></svg>
<div class="a" style="left:949px;top:294px;width:7px;height:1px;background:#8f8f8f"></div>
<div class="a" style="left:1052px;top:294px;width:7px;height:1px;background:#8f8f8f"></div>
<div class="a" style="left:1119px;top:294px;width:7px;height:1px;background:#8f8f8f"></div>
<div class="a" style="left:1208px;top:294px;width:7px;height:1px;background:#8f8f8f"></div>
<div class="a" style="left:947px;top:301px;width:272px;height:1px;background:#3a3a3a"></div>
<div class="a" style="left:947px;top:311px;width:13px;height:9px;box-sizing:border-box;border:1px solid #9a9a9a"></div>
<span class="t" id="h4" style="left:966px;top:310px;font-size:11px;color:#9a9a9a">4</span>
<div class="a" style="left:1018px;top:311px;width:13px;height:9px;box-sizing:border-box;border:1px solid #666;background:#3c3c3c"></div><div class="a" style="left:1020px;top:313px;width:9px;height:5px;background:#727272"></div>
<span class="t" style="left:1037px;top:310px;font-size:11px;color:#5e5e5e">0</span>
<div class="a" style="left:1089px;top:311px;width:13px;height:9px;box-sizing:border-box;border:1px dotted #666"></div><div class="a" style="left:1091px;top:313px;width:9px;height:5px;background:#6a6a6a"></div>
<span class="t" style="left:1108px;top:310px;font-size:11px;color:#5e5e5e">0</span>
<div class="a" style="left:1160px;top:311px;width:13px;height:9px;box-sizing:border-box;border:1px dotted #666"></div>
<span class="t" style="left:1179px;top:310px;font-size:11px;color:#5e5e5e">0</span>
<span class="t hd" id="rqk" style="right:93px;top:340px;transform-origin:100% 0;transform:scale(1.0247,1)">Быстрая коррекция</span>
<svg class="a" style="left:1213px;top:339px" width="10" height="11" viewBox="0 0 10 11"><path d="M9.500 0.500v10L0.500 5.500z" fill="#a9a9a9"/></svg>
<div class="a sep" style="top:357px"></div>
<span class="t hd" id="rkw" style="right:93px;top:372px;transform-origin:100% 0;transform:scale(1.0074,1)">Ключевые слова</span>
<svg class="a" style="left:1213px;top:371px" width="10" height="11" viewBox="0 0 10 11"><path d="M9.500 0.500v10L0.500 5.500z" fill="#a9a9a9"/></svg>
<div class="a sep" style="top:389px"></div>
<span class="t hd" id="rkl" style="right:93px;top:404px;transform-origin:100% 0;transform:scale(0.9943,1)">Список ключевых слов</span>
<svg class="a" style="left:1213px;top:403px" width="10" height="11" viewBox="0 0 10 11"><path d="M9.500 0.500v10L0.500 5.500z" fill="#a9a9a9"/></svg>
<div class="a sep" style="top:421px"></div>
<span class="t hd" id="rmd" style="right:93px;top:436px;transform-origin:100% 0;transform:scale(1.0431,1)">Метаданные</span>
<svg class="a" style="left:1213px;top:435px" width="10" height="11" viewBox="0 0 10 11"><path d="M9.500 0.500v10L0.500 5.500z" fill="#a9a9a9"/></svg>
<div class="a sep" style="top:453px"></div>
<span class="t hd" id="rcm" style="right:93px;top:468px;transform-origin:100% 0;transform:scale(1.0554,1)">Комментарий</span>
<svg class="a" style="left:1213px;top:467px" width="10" height="11" viewBox="0 0 10 11"><path d="M9.500 0.500v10L0.500 5.500z" fill="#a9a9a9"/></svg>
<div class="a sep" style="top:485px"></div>
<div class="a dd" style="left:943px;top:337px;width:95px;height:15px"></div><div class="a" style="left:1025px;top:338px;width:12px;height:13px;background:#484848;border-left:1px solid #222"></div>
<span class="t" id="dd1" style="left:948.7px;top:340px;font-size:9.500px;color:#b0b0b0;transform:scale(0.9869,1)">Заданный</span>
<svg class="a" style="left:1028px;top:339.500px" width="7" height="10" viewBox="0 0 7 10"><path d="M3.500 0.500L6.500 4h-6zM3.500 9.500L6.500 6h-6z" fill="#a8a8a8"/></svg>
<div class="a dd" style="left:943px;top:433px;width:115px;height:15px"></div><div class="a" style="left:1045px;top:434px;width:12px;height:13px;background:#484848;border-left:1px solid #222"></div>
<span class="t" id="dd2" style="left:948.7px;top:436px;font-size:9.500px;color:#b0b0b0;transform:scale(1.0023,1)">По умолчанию</span>
<svg class="a" style="left:1048px;top:435.500px" width="7" height="10" viewBox="0 0 7 10"><path d="M3.500 0.500L6.500 4h-6zM3.500 9.500L6.500 6h-6z" fill="#a8a8a8"/></svg>
<svg class="a" style="left:945px;top:403px" width="12" height="12" viewBox="0 0 12 12"><path d="M1 5.500h9M5.500 1v9" stroke="#d0d0d0" stroke-width="2" fill="none"/></svg>
<div class="a" style="left:938px;top:561px;width:290px;height:1px;background:#141414"></div><div class="a" style="left:938px;top:562px;width:290px;height:1px;background:#333"></div>
<div class="a btn" style="left:939px;top:570px;width:148px;height:27px"><span id="sy1" style="top:8px;transform:scaleX(0.9272)">Синхр. метаданные</span></div>
<div class="a btn" style="left:1092px;top:570px;width:135px;height:27px"><span id="sy2" style="top:8px;transform:scaleX(0.9438)">Синхр. настройки</span></div>

<!-- filmstrip header -->
<div class="a" style="left:48px;top:613px;width:27px;height:17px;box-sizing:border-box;border:1px solid #cfcfcf;border-top:3px solid #cfcfcf;background:#000"></div>
<div class="a" style="left:68px;top:614px;width:5px;height:1px;background:repeating-linear-gradient(90deg,#000 0,#000 1px,transparent 1px,transparent 2px)"></div>
<span class="t" id="s1" style="left:57px;top:617px;font-size:12px;color:#e6e6e6">1</span>
<div class="a" style="left:85px;top:613px;width:27px;height:17px;box-sizing:border-box;border:1px solid #6a6a6a;border-top:3px solid #6a6a6a;background:#000"></div>
<div class="a" style="left:105px;top:614px;width:5px;height:1px;background:repeating-linear-gradient(90deg,#000 0,#000 1px,transparent 1px,transparent 2px)"></div>
<span class="t" id="s2" style="left:95px;top:617px;font-size:12px;color:#7a7a7a">2</span>
<div class="a" style="left:122px;top:613px;width:1px;height:17px;background:repeating-linear-gradient(#5a5a5a 0,#5a5a5a 1px,transparent 1px,transparent 3px)"></div>
<svg class="a" style="left:133px;top:614px" width="16" height="16" viewBox="0 0 16 16" fill="#5a5a5a"><rect x="0" y="0" width="6" height="6"/><rect x="9" y="0" width="6" height="6"/><rect x="0" y="9" width="6" height="6"/><rect x="9" y="9" width="6" height="6"/></svg>
<svg class="a" style="left:159px;top:613px" width="14" height="17" viewBox="0 0 14 17"><path d="M0.500 8.500L7.500 1v4.500h6v6h-6V16z" fill="#5a5a5a"/></svg>
<svg class="a" style="left:183px;top:613px" width="14" height="17" viewBox="0 0 14 17"><path d="M13.500 8.500L6.500 1v4.500h-6v6h6V16z" fill="#5a5a5a"/></svg>
<div class="a" style="left:208px;top:613px;width:1px;height:17px;background:repeating-linear-gradient(#5a5a5a 0,#5a5a5a 1px,transparent 1px,transparent 3px)"></div>
<span class="t" id="pi" style="left:218.7px;top:619px;font-size:9.500px;color:#8c8c8c;transform:scale(0.9771,1)">Предыдущий импорт</span>
<span class="t" id="c1" style="left:344.8px;top:616px;font-size:13px;color:#9a9a9a;transform:scale(0.9538,1)">4</span>
<span class="t" id="c2" style="left:355.2px;top:619px;font-size:10px;color:#9a9a9a;transform:scale(0.9318,1)">фото</span>
<span class="t" id="c3" style="left:384px;top:616px;font-size:13px;color:#9a9a9a">/</span>
<span class="t" id="c4" style="left:393.0px;top:616px;font-size:13px;color:#fff;transform:scale(0.9952,1)">4</span>
<span class="t" id="c5" style="left:402.7px;top:619px;font-size:10px;color:#fff;font-weight:bold;transform:scale(0.8302,1)">выбрано</span>
<span class="t" id="c6" style="left:453px;top:615px;font-size:14px;color:#8c8c8c">/</span>
<span class="t" id="c7" style="left:461.5px;top:615px;font-size:14px;color:#8c8c8c;transform:scale(0.9453,1)">5.jpg</span>
<svg class="a" style="left:498px;top:619px" width="8" height="5" viewBox="0 0 8 5"><path d="M0.300 0.300h7.400L4 4.700z" fill="#8c8c8c"/></svg>
<span class="t" id="ff" style="left:1040.7px;top:618px;font-size:10px;color:#9a9a9a;transform:scale(1.0364,1)">Фильтр:</span>
<div class="a" style="left:1098px;top:614px;width:127px;height:16px;box-sizing:border-box;border:1px solid #5a5a5a;background:#2b2b2b"></div>
<div class="a" style="left:1211px;top:615px;width:13px;height:14px;box-sizing:border-box;border-left:1px solid #1a1a1a;background:#3a3a3a"></div>
<svg class="a" style="left:1214px;top:617px" width="7" height="10" viewBox="0 0 7 10"><path d="M3.500 0.500L6.500 4h-6zM3.500 9.500L6.500 6h-6z" fill="#b8b8b8"/></svg>
<span class="t" id="ffv" style="left:1103.4px;top:618px;font-size:10px;color:#8c8c8c;transform:scale(0.9820,1)">Без фильтра</span>
<div class="a" style="left:1235px;top:614px;width:10px;height:16px;box-sizing:border-box;border:1px solid #6a6a6a;background:linear-gradient(#333 0,#333 50%,#bdbdbd 50%,#bdbdbd 100%)"></div>
<!-- filmstrip -->
<div class="a" style="left:51px;top:640px;width:1193px;height:72px;background:#222"></div>
<div class="a" style="left:51px;top:640px;width:72px;height:72px;background:#8e8e8e"></div>
<div class="a" style="left:51px;top:640px;width:71px;height:72px;background:#e4e4e4;box-shadow:inset 1px 0 0 rgba(255,255,255,.3)"></div>
<div class="a" style="left:123px;top:640px;width:72px;height:72px;background:#8e8e8e"></div>
<div class="a" style="left:123px;top:640px;width:71px;height:72px;background:#bfbfbf;box-shadow:inset 1px 0 0 rgba(255,255,255,.3)"></div>
<div class="a" style="left:195px;top:640px;width:72px;height:72px;background:#8e8e8e"></div>
<div class="a" style="left:195px;top:640px;width:71px;height:72px;background:#bfbfbf;box-shadow:inset 1px 0 0 rgba(255,255,255,.3)"></div>
<div class="a" style="left:267px;top:640px;width:72px;height:72px;background:#8e8e8e"></div>
<div class="a" style="left:267px;top:640px;width:71px;height:72px;background:#bfbfbf;box-shadow:inset 1px 0 0 rgba(255,255,255,.3)"></div>
<div class="a" style="left:54px;top:651.5px;width:67px;height:44px;background:#e6e6e6;box-shadow:0 1px 3px rgba(0,0,0,.35)"></div>
<div class="a" style="left:55.5px;top:653px;width:64px;height:41px;background:#000"></div>
<svg class="ph" style="left:56.5px;top:654px" width="62" height="39" viewBox="0 0 148 92" preserveAspectRatio="none"><use href="#p1"/></svg>
<svg class="a" style="left:103.5px;top:678px" width="15" height="15" viewBox="0 0 15 15"><use href="#bdg"/></svg>
<div class="a" style="left:125px;top:651.5px;width:67px;height:44px;background:#e6e6e6;box-shadow:0 1px 3px rgba(0,0,0,.35)"></div>
<div class="a" style="left:126.5px;top:653px;width:64px;height:41px;background:#000"></div>
<svg class="ph" style="left:127.5px;top:654px" width="62" height="39" viewBox="0 0 148 92" preserveAspectRatio="none"><use href="#p2"/></svg>
<svg class="a" style="left:174.5px;top:678px" width="15" height="15" viewBox="0 0 15 15"><use href="#bdg"/></svg>
<div class="a" style="left:205px;top:648px;width:51.5px;height:51.5px;background:#e6e6e6;box-shadow:0 1px 3px rgba(0,0,0,.35)"></div>
<div class="a" style="left:206.5px;top:649.5px;width:48.5px;height:48.5px;background:#000"></div>
<svg class="ph" style="left:207.5px;top:650.5px" width="46.5" height="46.5" viewBox="0 0 132 132" preserveAspectRatio="none"><use href="#p3"/></svg>
<svg class="a" style="left:239px;top:682px" width="15" height="15" viewBox="0 0 15 15"><use href="#bdg"/></svg>
<div class="a" style="left:269px;top:651.5px;width:67px;height:44px;background:#e6e6e6;box-shadow:0 1px 3px rgba(0,0,0,.35)"></div>
<div class="a" style="left:270.5px;top:653px;width:64px;height:41px;background:#000"></div>
<svg class="ph" style="left:271.5px;top:654px" width="62" height="39" viewBox="0 0 148 92" preserveAspectRatio="none"><use href="#p4"/></svg>
<svg class="a" style="left:318.5px;top:678px" width="15" height="15" viewBox="0 0 15 15"><use href="#bdg"/></svg>

</body>
</html>
